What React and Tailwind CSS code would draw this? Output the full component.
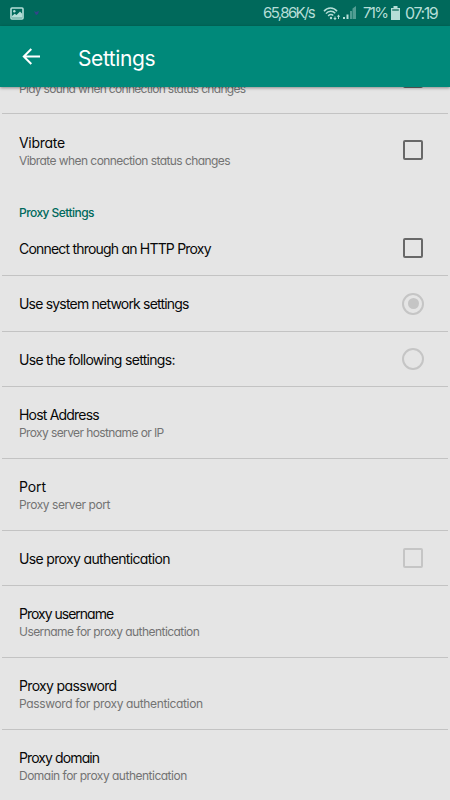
const settings = [
  {
    title: 'Vibrate',
    summary: 'Vibrate when connection status changes',
    control: 'checkbox',
    height: 'h-[71px]',
    offset: 'pt-[3px]',
    titleSpacing: 'tracking-[-0.3px]',
    summarySpacing: 'tracking-[-0.57px]',
  },
  { header: 'Proxy Settings' },
  {
    title: 'Connect through an HTTP Proxy',
    control: 'checkbox',
    height: 'h-[55px]',
    divider: true,
    titleSpacing: 'tracking-[-0.8px]',
  },
  {
    title: 'Use system network settings',
    control: 'radio',
    checked: true,
    disabled: true,
    height: 'h-[56px]',
    divider: true,
    titleSpacing: 'tracking-[-0.8px]',
  },
  {
    title: 'Use the following settings:',
    control: 'radio',
    disabled: true,
    height: 'h-[55px]',
    divider: true,
    titleSpacing: 'tracking-[-0.7px]',
  },
  {
    title: 'Host Address',
    summary: 'Proxy server hostname or IP',
    height: 'h-[72px]',
    divider: true,
    titleSpacing: 'tracking-[-0.8px]',
    summarySpacing: 'tracking-[-0.6px]',
  },
  {
    title: 'Port',
    summary: 'Proxy server port',
    height: 'h-[72px]',
    divider: true,
    titleSpacing: 'tracking-[-0.1px]',
    summarySpacing: 'tracking-[-0.42px]',
  },
  {
    title: 'Use proxy authentication',
    control: 'checkbox',
    disabled: true,
    height: 'h-[55px]',
    divider: true,
    titleSpacing: 'tracking-[-0.65px]',
  },
  {
    title: 'Proxy username',
    summary: 'Username for proxy authentication',
    height: 'h-[72px]',
    divider: true,
    titleSpacing: 'tracking-[-1px]',
    summarySpacing: 'tracking-[-0.55px]',
  },
  {
    title: 'Proxy password',
    summary: 'Password for proxy authentication',
    height: 'h-[72px]',
    divider: true,
    titleSpacing: 'tracking-[-0.65px]',
    summarySpacing: 'tracking-[-0.36px]',
  },
  {
    title: 'Proxy domain',
    summary: 'Domain for proxy authentication',
    height: 'h-[71px]',
    titleSpacing: 'tracking-[-0.9px]',
    summarySpacing: 'tracking-[-0.5px]',
  },
]

function Checkbox({ disabled }) {
  return (
    <span
      className={`block h-5 w-5 shrink-0 rounded-[2px] border-2 ${disabled ? 'border-[#c5c5c5]' : 'border-[#686868]'}`}
    />
  )
}

function Radio({ checked }) {
  return (
    <span className="-mx-px flex h-[22px] w-[22px] shrink-0 items-center justify-center rounded-full border-2 border-[#c5c5c5]">
      {checked && <span className="h-[11px] w-[11px] rounded-full bg-[#c5c5c5]" />}
    </span>
  )
}

function SettingRow({ item }) {
  return (
    <div
      className={`mx-[2px] flex shrink-0 items-center justify-between pr-[25px] pl-[17px] ${item.height} ${item.divider ? 'border-b border-[#c3c3c3]' : ''}`}
    >
      <div className={`whitespace-nowrap ${item.offset || 'pt-px'}`}>
        <div className={`text-[14px] leading-[18px] text-[#080808] ${item.titleSpacing}`}>{item.title}</div>
        {item.summary && (
          <div className={`text-[12px] leading-[17px] text-[#737373] ${item.summarySpacing}`}>{item.summary}</div>
        )}
      </div>
      {item.control === 'checkbox' && <Checkbox disabled={item.disabled} />}
      {item.control === 'radio' && <Radio checked={item.checked} />}
    </div>
  )
}

function StatusBar() {
  return (
    <div className="flex h-[26px] shrink-0 items-center bg-[#00695b] pr-[11px] pl-[10px] text-[16px] text-[#b5ded7]">
      {/* Picture notification */}
      <svg width="14" height="13" viewBox="0 0 14 13">
        <rect x="1" y="1" width="12" height="11" rx="1" fill="none" stroke="currentColor" strokeWidth="1.6" />
        <circle cx="4.3" cy="4.2" r="1.2" fill="currentColor" />
        <path d="M2 10.8V9l2.7-2.2 1.8 1.1L10 4.5l2.2 2.3v4z" fill="currentColor" />
      </svg>
      <svg className="ml-[9px]" width="7" height="6" viewBox="0 0 7 6">
        <path d="M1 1l2 1 3-1-1 3-2 1-1-2z" fill="#35438a" />
      </svg>
      <div className="ml-auto flex items-center">
        <span className="w-[52px] text-[15px] whitespace-nowrap tracking-[-1.6px]">65,86K/s</span>
        {/* Wifi with traffic arrows */}
        <svg className="ml-[8px]" width="18" height="15" viewBox="0 0 18 15" fill="none" stroke="currentColor">
          <path d="M1 5.3C4.3.9 10.7.9 14 5.3M3 7.6c2.4-3 6.8-3.2 9.2-.4M5.2 10c1.3-1.7 3.6-1.9 5-.5" strokeWidth="1.5" />
          <circle cx="8" cy="12" r="1.2" fill="currentColor" stroke="none" />
          <path d="M12 10.5V13M15.5 13V9.5" strokeWidth="1" />
          <path d="M10.3 12h3.4L12 14.2zM13.8 10.7h3.4L15.5 8.5z" fill="currentColor" stroke="none" />
        </svg>
        {/* Signal strength */}
        <svg className="ml-[2px]" width="14" height="14" viewBox="0 0 14 14" fill="currentColor">
          <path d="M0 11h2v2H0zM3.5 8.5h2V13h-2z" />
          <path d="M7 5h2v8H7zM9.5 2.5L13 0v13H9.5z" opacity=".45" />
        </svg>
        <span className="ml-[6px] w-[23px] text-[15px] whitespace-nowrap tracking-[-1.7px]">71%</span>
        {/* Battery */}
        <svg className="ml-[5px]" width="9" height="14" viewBox="0 0 9 14">
          <path d="M2.5 0h4v2H9v12H0V2h2.5z" fill="currentColor" />
          <path d="M1.2 3.2h6.6v1.6H1.2z" fill="#2f8073" />
        </svg>
        <span className="ml-[5px] w-[34px] whitespace-nowrap tracking-[-1.4px]">07:19</span>
      </div>
    </div>
  )
}

export default function App() {
  return (
    <div className="flex h-[800px] w-[450px] flex-col overflow-hidden bg-[#e5e5e5] [font-family:Inter,'Liberation_Sans',sans-serif] [font-feature-settings:'cv11']">
      <StatusBar />
      <header className="z-10 flex h-[61px] shrink-0 items-center bg-[#00897a] pl-[22px] text-white shadow-[0_1px_3px_rgba(0,0,0,0.4)]">
        <svg width="18" height="17" viewBox="0 0 18 17" fill="none" stroke="currentColor" strokeWidth="2">
          <path d="M9.3 1L1.8 8.5l7.5 7.5M1.8 8.5H18" />
        </svg>
        <h1 className="ml-[38px] pt-[4px] text-[21px] leading-6 tracking-[-0.4px]">Settings</h1>
      </header>

      {/* Sound row, mostly scrolled under the toolbar */}
      <div className="mx-[2px] flex h-[27px] shrink-0 items-end justify-between border-b border-[#c3c3c3] pr-[25px] pl-[17px]">
        <div className="mb-[16px] text-[12px] leading-[17px] tracking-[-0.69px] whitespace-nowrap text-[#737373]">
          Play sound when connection status changes
        </div>
        <div className="mb-[25px]">
          <Checkbox />
        </div>
      </div>

      {settings.map((item) =>
        item.header ? (
          <div
            key={item.header}
            className="flex h-[36px] shrink-0 items-end pl-[19px] text-[12px] leading-[17px] font-medium tracking-[-0.55px] text-[#00695c]"
          >
            {item.header}
          </div>
        ) : (
          <SettingRow key={item.title} item={item} />
        ),
      )}
    </div>
  )
}
